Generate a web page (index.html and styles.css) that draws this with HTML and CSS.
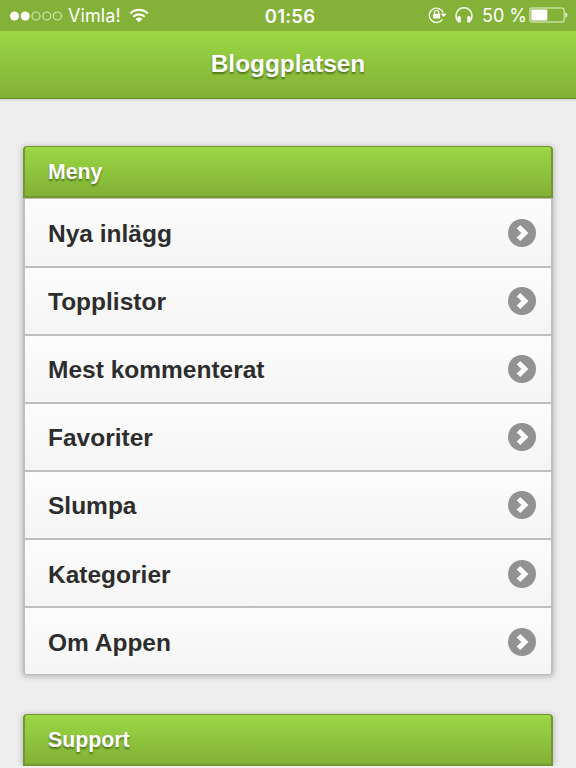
FILE: index.html
```html
<!DOCTYPE html>
<html lang="sv">
<head>
<meta charset="utf-8">
<title>Bloggplatsen</title>
<link rel="stylesheet" href="styles.css">
</head>
<body>
<svg class="defs" width="0" height="0" aria-hidden="true">
  <symbol id="arrow" viewBox="0 0 28 28">
    <circle cx="14" cy="14" r="14" fill="#929292"/>
    <path d="M10.500 7.700 16.900 14l-6.400 6.300" fill="none" stroke="#fff" stroke-width="5"/>
  </symbol>
</svg>
<div class="status">
  <div class="left">
    <svg class="signal" width="54" height="12" viewBox="0 0 54 12">
      <g fill="#fff"><circle cx="5.500" cy="6" r="4.500"/><circle cx="16.200" cy="6" r="4.500"/></g>
      <g fill="none" stroke="#d3e5b6" stroke-width="1.200"><circle cx="27" cy="6" r="4"/><circle cx="37.800" cy="6" r="4"/><circle cx="48.400" cy="6" r="4"/></g>
    </svg>
    <span class="carrier">Vimla!</span>
    <svg class="wifi" width="20" height="15" viewBox="0 0 20 15">
      <g fill="none" stroke="#fff" stroke-width="2.100"><path d="M1.300 5.500a12.300 12.300 0 0 1 17.400 0"/><path d="M4.300 8.700a8.100 8.100 0 0 1 11.400 0"/></g>
      <path d="M10 14.200 6.600 10.900a4.900 4.900 0 0 1 6.800 0z" fill="#fff"/>
    </svg>
  </div>
  <span class="clock">01:56</span>
  <div class="right">
    <svg class="lock" width="19" height="17" viewBox="0 0 19 17">
      <path d="M14.500 12.300A7.200 7.200 0 1 1 15.400 6.300" fill="none" stroke="#f4f9ea" stroke-width="1.400"/>
      <path d="M12.700 6.700h5.900l-2.900 3.400z" fill="#fff"/>
      <path d="M5.100 6.900h7v4.600h-7z" fill="#fff"/>
      <path d="M6.500 7.100V5.400a2.100 2.100 0 0 1 4.200 0v1.700" fill="none" stroke="#fff" stroke-width="1.300"/>
    </svg>
    <svg class="phones" width="18" height="17" viewBox="0 0 18 17">
      <path d="M2.600 13.800C1.100 11.800 1 10.200 1 8.700a8 8 0 0 1 16 0c0 1.500-.1 3.100-1.600 5.100" fill="none" stroke="#f4f9ea" stroke-width="1.600"/>
      <rect x="2.500" y="9.200" width="3.200" height="6.200" rx="1" fill="#fff"/><rect x="12.300" y="9.200" width="3.200" height="6.200" rx="1" fill="#fff"/>
    </svg>
    <span class="percent">50 %</span>
    <svg class="battery" width="39" height="17" viewBox="0 0 39 17">
      <rect x=".8" y=".9" width="34.400" height="14" rx="2.500" fill="none" stroke="#c5dda0" stroke-width="1.500"/>
      <rect x="2.300" y="2.400" width="16" height="11" rx=".8" fill="#fff"/>
      <path d="M36.300 5.200c2.700.8 2.700 4.800 0 5.600z" fill="#e3efcf"/>
    </svg>
  </div>
</div>
<header class="bar"><h1>Bloggplatsen</h1></header>
<main>
  <section class="card">
    <h2>Meny</h2>
    <ul>
      <li><span>Nya inlägg</span><svg><use href="#arrow"/></svg></li>
      <li><span>Topplistor</span><svg><use href="#arrow"/></svg></li>
      <li><span>Mest kommenterat</span><svg><use href="#arrow"/></svg></li>
      <li><span>Favoriter</span><svg><use href="#arrow"/></svg></li>
      <li><span>Slumpa</span><svg><use href="#arrow"/></svg></li>
      <li><span>Kategorier</span><svg><use href="#arrow"/></svg></li>
      <li><span>Om Appen</span><svg><use href="#arrow"/></svg></li>
    </ul>
  </section>
  <section class="card">
    <h2>Support</h2>
  </section>
</main>
</body>
</html>
```
FILE: styles.css
```css
* { box-sizing: border-box; }
body {
  margin: 0;
  background: #eeeeee;
  font-family: "Liberation Sans", Arial, sans-serif;
}
.defs { display: block; }
.status {
  height: 31px;
  display: grid;
  grid-template-columns: 1fr auto 1fr;
  align-items: center;
  padding: 0 8px 0 9px;
  background: #84b238;
  color: #fff;
  font: 18px/30px Inter, sans-serif;
}
.left, .right { display: flex; align-items: center; }
.right { justify-content: flex-end; }
.carrier { margin-left: 5px; width: 54px; letter-spacing: .1px; white-space: nowrap; padding-top: 1px; }
.wifi { margin-left: 7px; }
.clock { font-weight: 600; font-size: 18.500px; letter-spacing: .2px; margin-left: 3px; padding-top: 1px; }
.phones { margin-left: 8px; }
.percent { margin-left: 9px; width: 43px; white-space: nowrap; padding-top: 1px; }
.battery { margin-left: 4px; }
.bar {
  height: 68px;
  display: flex;
  align-items: center;
  justify-content: center;
  background: linear-gradient(#9cd845, #82b037);
  border-bottom: 1px solid #6c952c;
  box-shadow: 0 1px 2px rgba(0, 0, 0, .15);
}
h1, h2 {
  margin: 0;
  color: #fff;
  font-weight: bold;
  text-shadow: 0 1.500px 2px #4d7419;
}
h1 { font-size: 24.400px; line-height: 30px; padding-bottom: 2px; }
main { padding: 47px 23px 0; }
.card {
  border-radius: 4px;
  box-shadow: 0 1px 6px rgba(0, 0, 0, .3);
}
.card + .card { margin-top: 39px; }
.card h2 {
  height: 52px;
  padding: 0 23px;
  font-size: 21.300px;
  line-height: 51px;
  background: linear-gradient(#9cd845, #82b037);
  border: 1.500px solid #72982f;
  border-width: 1px 2px 2px;
  border-radius: 4px 4px 0 0;
}
ul {
  list-style: none;
  margin: 0;
  padding: 0;
  border: 2px solid #bebebe;
  border-top: 0;
  border-bottom-width: 1px;
  border-radius: 0 0 4px 4px;
  overflow: hidden;
}
li {
  height: 68.150px;
  display: flex;
  align-items: center;
  justify-content: space-between;
  padding: 1px 15px 0 23px;
  border-top: 2px solid #bebebe;
  background: linear-gradient(#fcfcfc, #f5f5f5);
  color: #2d2d2d;
  font-size: 24.500px;
  font-weight: bold;
  text-shadow: 0 1px 0 #fff;
}
li:first-child { height: 67.500px; border-top-width: 1px; }
li span { padding-top: 2px; }
li svg { width: 28px; height: 28px; }
```
